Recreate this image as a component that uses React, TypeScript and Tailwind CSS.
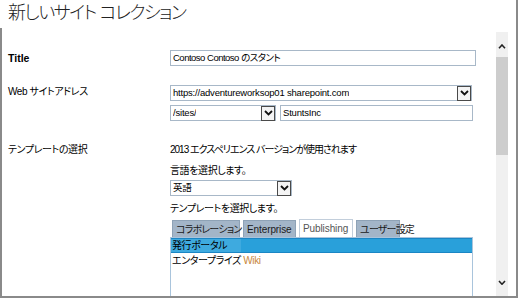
const font = "font-['Liberation_Sans','Noto_Sans_CJK_JP',sans-serif] [font-feature-settings:'palt']";

function DropButton() {
  return (
    <div className="flex h-[15px] w-[14px] shrink-0 items-center justify-center border border-[#4a4a4a] bg-[#f4f4f4]">
      <svg width="9" height="6" viewBox="0 0 9 6">
        <polyline points="1,1 4.5,4.5 8,1" fill="none" stroke="#111" strokeWidth="1.8" />
      </svg>
    </div>
  );
}

function Select({ value, width }: { value: string; width: string }) {
  return (
    <div className={`flex h-[16px] items-center justify-between border border-[#a8b8c8] bg-white pl-[2px] ${width}`}>
      <span className="truncate text-[9.5px] leading-none tracking-[-0.2px] text-black">{value}</span>
      <DropButton />
    </div>
  );
}

function Tab({ label, active = false, width, tight = false }: { label: string; active?: boolean; width: string; tight?: boolean }) {
  return (
    <div
      className={`flex items-center whitespace-nowrap px-[3px] text-[10px] ${tight ? "tracking-[-0.8px]" : "tracking-[-0.1px]"} ${width} ${
        active
          ? "h-[18px] border border-b-0 border-[#c2cedb] bg-white text-[#555]"
          : "mt-[1px] h-[17px] border border-b-0 border-[#8ea2b6] bg-[#a3b5c8] text-[#1a1a1a]"
      }`}
    >
      {label}
    </div>
  );
}

function Scrollbar() {
  return (
    <div className="mt-[4px] flex w-[12px] flex-col bg-[#f0f0f0]">
      <div className="flex h-[25px] items-end justify-center pb-[8px]">
        <svg width="8" height="5" viewBox="0 0 8 5">
          <polyline points="1,4.2 4,1 7,4.2" fill="none" stroke="#222" strokeWidth="1.6" />
        </svg>
      </div>
      <div className="h-[98px] bg-[#cdcdcd]" />
      <div className="flex-1" />
      <div className="flex h-[20px] items-start justify-center pt-[4px]">
        <svg width="8" height="5" viewBox="0 0 8 5">
          <polyline points="1,1 4,4.2 7,1" fill="none" stroke="#222" strokeWidth="1.6" />
        </svg>
      </div>
    </div>
  );
}

export default function App() {
  return (
    <div className={`h-[299px] w-[520px] overflow-hidden bg-white text-black ${font}`}>
      <div className="flex h-[298px] w-[518px] flex-col border-r-2 border-b-2 border-[#8a8a8a]">
        {/* Header */}
        <div className="h-[28px] shrink-0 pl-[8px] pt-[1px] text-[18px] font-light leading-[24px] tracking-[-1.5px] text-[#222]">
          新しいサイト コレクション
        </div>

        {/* Body */}
        <div className="flex min-h-0 flex-1 border-l-2 border-[#8a8a8a]">
          <div className="min-w-0 flex-1 overflow-hidden pl-[6px] text-[10px] tracking-[-0.4px]">
            {/* Title */}
            <div className="mt-[22px] flex">
              <div className="w-[162px] text-[10.5px] font-bold leading-[16px] tracking-normal">Title</div>
              <div className="flex h-[16px] w-[306px] items-center border border-[#a8b8c8] pl-[2px] text-[9.5px] tracking-[-0.5px]">
                Contoso Contoso のスタント
              </div>
            </div>

            {/* Web address */}
            <div className="mt-[19px] flex">
              <div className="w-[162px] leading-[13px]">Web サイトアドレス</div>
              <div className="flex flex-col gap-[4px]">
                <Select value="https://adventureworksop01 sharepoint.com" width="w-[302px]" />
                <div className="flex gap-[4px]">
                  <Select value="/sites/" width="w-[106px]" />
                  <div className="flex h-[16px] w-[193px] items-center border border-[#a8b8c8] pl-[2px] text-[9.5px] tracking-[-0.2px]">
                    StuntsInc
                  </div>
                </div>
              </div>
            </div>

            {/* Template */}
            <div className="mt-[22px] flex">
              <div className="w-[162px] leading-[14px]">テンプレートの選択</div>
              <div className="flex flex-col">
                <div className="leading-[14px] tracking-[-1px]">2013 エクスペリエンス バージョンが使用されます</div>
                <div className="mt-[7px] leading-[14px]">言語を選択します。</div>
                <div className="mt-[2px]">
                  <Select value="英語" width="w-[122px]" />
                </div>
                <div className="mt-[6px] leading-[14px]">テンプレートを選択します。</div>
                <div className="mt-[3px] flex gap-[3px] pl-[2px]">
                  <Tab label="コラボレーション" tight width="w-[68px]" />
                  <Tab label="Enterprise" width="w-[53px]" />
                  <Tab label="Publishing" active width="w-[54px]" />
                  <Tab label="ユーザー設定" tight width="w-[44px]" />
                </div>
                <div className="h-[70px] w-[303px] border border-[#a9c4dc] bg-white">
                  <div className="flex h-[15px] items-center border-y border-[#1b86c4] bg-[#29a0da]">
                    <span className="bg-[#3eaadf] pl-[1px] pr-[14px] leading-[13px]">発行ポータル</span>
                  </div>
                  <div className="flex h-[14px] items-center pl-[1px]">
                    エンタープライズ&nbsp;<span className="text-[#c8873a]">Wiki</span>
                  </div>
                </div>
              </div>
            </div>
          </div>
          <Scrollbar />
          <div className="w-[8px]" />
        </div>
      </div>
    </div>
  );
}
